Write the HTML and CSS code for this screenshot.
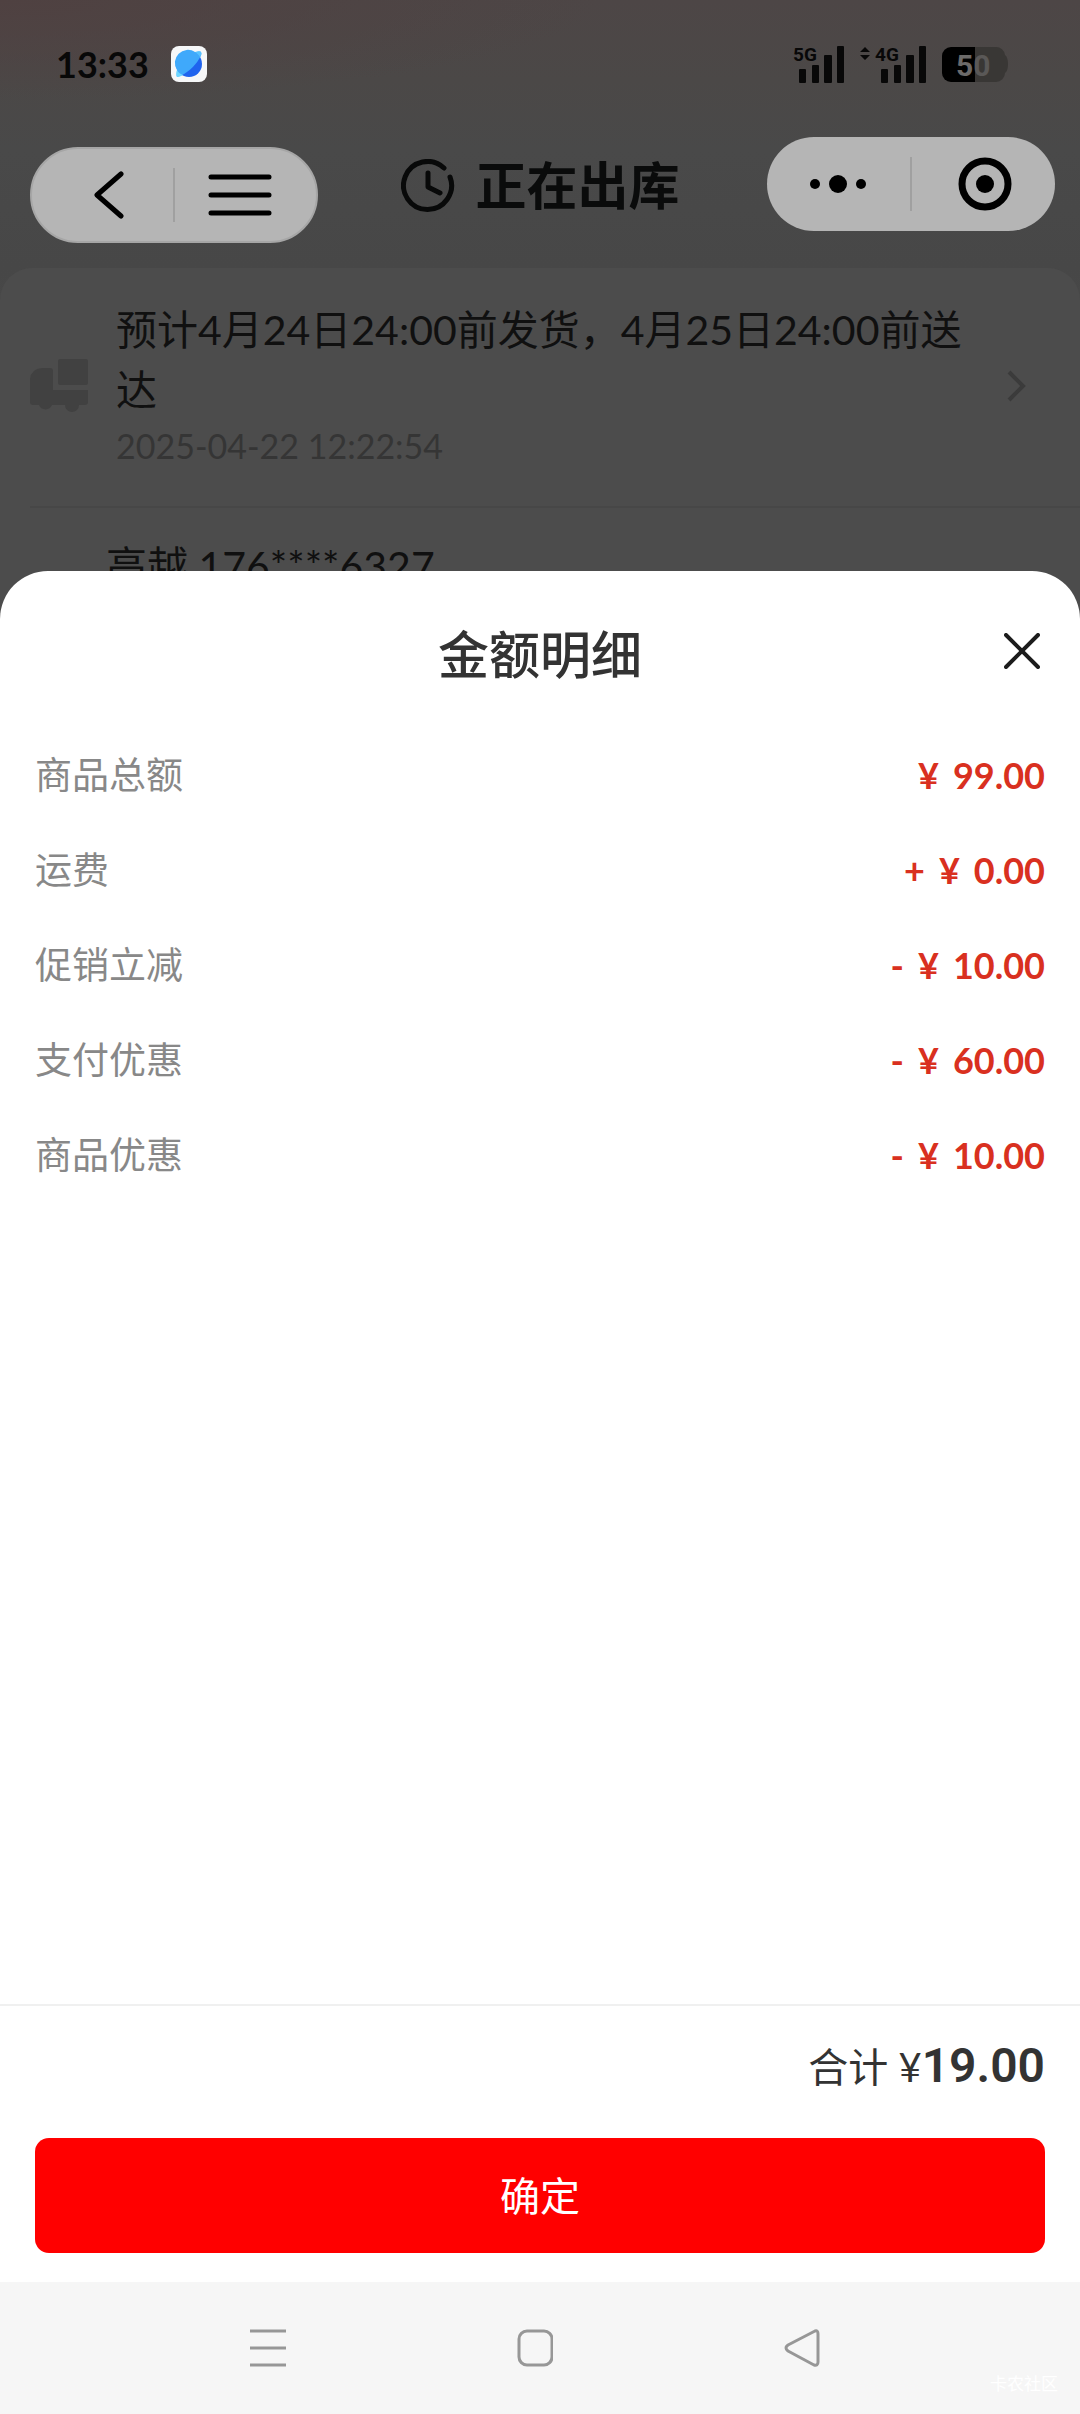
FILE: index.html
```html
<!DOCTYPE html>
<html lang="zh-CN">
<head>
<meta charset="utf-8">
<meta name="viewport" content="width=device-width, initial-scale=1">
<title>金额明细</title>
<link rel="stylesheet" href="styles.css">
</head>
<body>
<div class="screen">
  <div class="status-bar">
    <div class="status-left">
      <time class="clock">13:33</time>
      <svg class="app-icon" viewBox="0 0 36 36" aria-hidden="true">
        <rect width="36" height="36" rx="8" fill="#f6f7f8"/>
        <circle cx="18" cy="18" r="13" fill="#1f63ee"/>
        <path d="M30 6c1 2 0 4-2 7C24 20 16 28 6 31c-1-2 0-4 0-7a13 13 0 0 1 18-18c3 0 5-1 6 0z" fill="#3fa9fb"/>
        <path d="M6 24c-1 3-1 5 0 7 2 0 4-1 6-2-3-1-5-3-6-5z" fill="#6cd6ff"/>
        <path d="M30 6c-1-1-3-1-6 0 2 1 4 3 5 5 1-2 2-3 1-5z" fill="#58c3ff"/>
      </svg>
    </div>
    <div class="status-right">
      <svg width="56" height="53" viewBox="-2 -8 56 53" role="img">
        <text class="net" x="0" y="15">5G</text>
        <g fill="#080808"><rect x="6" y="23" width="7" height="14" rx="1"/><rect x="19" y="19" width="7" height="18" rx="1"/><rect x="31" y="9" width="8" height="28" rx="1"/><rect x="44" y="0" width="7" height="37" rx="1"/></g>
      </svg>
      <svg width="71" height="53" viewBox="-2 -8 71 53" role="img">
        <path d="M5 1l5 5H0zM5 14l5-5H0z" fill="#080808"/>
        <text class="net" x="15" y="15">4G</text>
        <g fill="#080808"><rect x="21" y="23" width="7" height="14" rx="1"/><rect x="34" y="19" width="7" height="18" rx="1"/><rect x="46" y="9" width="8" height="28" rx="1"/><rect x="59" y="0" width="7" height="37" rx="1"/></g>
      </svg>
      <svg width="71" height="53" viewBox="-2 -9 71 53" role="img">
        <path d="M33 0h21a9 9 0 0 1 9 8c4 2 4 16 0 18a9 9 0 0 1-9 9H33z" fill="#393735"/>
        <path d="M9 0h24v35H9a9 9 0 0 1-9-9V9a9 9 0 0 1 9-9z" fill="#000"/>
        <text x="14" y="29" class="charge">5<tspan fill="#5a5857">0</tspan></text>
      </svg>
    </div>
  </div>

  <header class="nav">
    <div class="pill pill-left">
      <button class="pill-btn" aria-label="返回">
        <svg width="30" height="48" viewBox="0 0 30 48"><path d="M27 3L3 24l24 21" fill="none" stroke="#000" stroke-width="5" stroke-linecap="round" stroke-linejoin="round"/></svg>
      </button>
      <span class="pill-line"></span>
      <button class="pill-btn" aria-label="菜单">
        <svg width="64" height="42" viewBox="0 0 64 42"><path d="M3 3h58M3 21h58M3 39h58" stroke="#000" stroke-width="5" stroke-linecap="round"/></svg>
      </button>
    </div>
    <h1 class="nav-title">
      <svg width="54" height="54" viewBox="0 0 54 54" aria-hidden="true"><path d="M43 9A24 24 0 1 0 49 18M27 14v14l12 6" fill="none" stroke="#080909" stroke-width="5" stroke-linecap="round" stroke-linejoin="round"/></svg>
      <span>正在出库</span>
    </h1>
    <div class="pill pill-right">
      <button class="pill-btn" aria-label="更多">
        <svg width="58" height="20" viewBox="0 0 58 20"><circle cx="6" cy="10" r="5"/><circle cx="29" cy="10" r="9"/><circle cx="52" cy="10" r="5"/></svg>
      </button>
      <span class="pill-line"></span>
      <button class="pill-btn" aria-label="关闭小程序">
        <svg width="54" height="54" viewBox="0 0 54 54"><circle cx="27" cy="27" r="23" fill="none" stroke="#000" stroke-width="7"/><circle cx="27" cy="27" r="9"/></svg>
      </button>
    </div>
  </header>

  <main class="card">
    <a class="delivery" href="#logistics">
      <svg class="truck" width="58" height="54" viewBox="0 0 58 54" aria-hidden="true"><g fill="#414141"><path d="M12 9h8a3 3 0 0 1 3 3v19h35v12a3 3 0 0 1-3 3h-6a7 7 0 0 1-14 0H22a7 7 0 0 1-13 0H3a3 3 0 0 1-3-3V20Q1 10 12 9z"/><rect x="28" y="0" width="30" height="26" rx="2"/></g></svg>
      <span class="delivery-text">
        <span class="delivery-main">预计4月24日24:00前发货，4月25日24:00前送达</span>
        <span class="delivery-time">2025-04-22 12:22:54</span>
      </span>
      <svg class="chevron" width="20" height="34" viewBox="0 0 20 34" aria-hidden="true"><path d="M3 3l14 14L3 31" fill="none" stroke="#3b3b3b" stroke-width="4"/></svg>
    </a>
    <p class="receiver">高越 176****6327</p>
  </main>

  <section class="sheet" role="dialog" aria-labelledby="sheet-title">
    <div class="sheet-head">
      <h2 class="sheet-title" id="sheet-title">金额明细</h2>
      <button class="close" aria-label="关闭">
        <svg width="36" height="36" viewBox="0 0 36 36"><path d="M2 2l32 32M34 2L2 34" stroke="#1c1c1c" stroke-width="4" stroke-linecap="round"/></svg>
      </button>
    </div>
    <dl class="fees">
      <div class="fee"><dt>商品总额</dt><dd><span>¥</span><span>99.00</span></dd></div>
      <div class="fee"><dt>运费</dt><dd><span>+</span><span>¥</span><span>0.00</span></dd></div>
      <div class="fee"><dt>促销立减</dt><dd><span>-</span><span>¥</span><span>10.00</span></dd></div>
      <div class="fee"><dt>支付优惠</dt><dd><span>-</span><span>¥</span><span>60.00</span></dd></div>
      <div class="fee"><dt>商品优惠</dt><dd><span>-</span><span>¥</span><span>10.00</span></dd></div>
    </dl>
    <div class="sheet-foot">
      <p class="total">合计 ¥<strong>19.00</strong></p>
      <button class="confirm">确定</button>
    </div>
  </section>
</div>

<nav class="system-nav">
  <button aria-label="最近任务"><svg width="36" height="38" viewBox="0 0 36 38"><path d="M0 2h36M0 19h36M0 36h36" stroke="#979797" stroke-width="3"/></svg></button>
  <button aria-label="主屏幕"><svg width="36" height="38" viewBox="0 0 36 38"><rect x="2" y="2" width="33" height="34" rx="8" fill="none" stroke="#979797" stroke-width="3"/></svg></button>
  <button aria-label="返回"><svg width="36" height="38" viewBox="0 0 36 38"><path d="M31 2Q34 1 34 5v28q0 4-4 3L4 22q-4-3 0-6z" fill="none" stroke="#979797" stroke-width="3" stroke-linejoin="round"/></svg></button>
  <span class="watermark">卡农社区</span>
</nav>
</body>
</html>
```
FILE: styles.css
```css
* {
  box-sizing: border-box;
  margin: 0;
  padding: 0;
}

body {
  display: flex;
  flex-direction: column;
  min-height: 100vh;
  font-family: Lato, "Noto Sans CJK SC", sans-serif;
  font-size: 40px;
  color: #333;
  background: #fff;
}

button {
  display: flex;
  align-items: center;
  justify-content: center;
  border: 0;
  background: none;
  font: inherit;
}

svg {
  display: block;
  flex: none;
}

.screen {
  position: relative;
  flex: 1;
  background:
    radial-gradient(ellipse 600px 100px at 0 0, #4f4141 0%, transparent 100%),
    linear-gradient(#4d4646 0, #4b4847 80px, #494949 150px, #474747 268px, #4b4b4b 400px);
}

/* status bar */
.status-bar {
  display: flex;
  justify-content: space-between;
  align-items: center;
  height: 128px;
  padding: 0 69px 0 56px;
}

.status-left,
.status-right {
  display: flex;
  align-items: center;
}

.status-left {
  gap: 22px;
}

.clock {
  font-size: 36px;
  font-weight: 700;
  line-height: 40px;
  color: #080808;
}

.app-icon {
  width: 36px;
  height: 36px;
}

.status-right {
  gap: 11px;
}

.net {
  font: 700 19px Roboto, sans-serif;
  fill: #080808;
}

.charge {
  font: 700 30px Roboto, sans-serif;
  fill: #6c6a69;
}

/* top navigation */
.nav {
  display: flex;
  justify-content: space-between;
  align-items: flex-start;
  height: 140px;
  padding: 9px 25px 0 30px;
}

.pill {
  display: grid;
  grid-template-columns: 1fr 2px 1fr;
  align-items: center;
  width: 288px;
  height: 94px;
  border-radius: 47px;
  background: #b5b5b5;
}

.pill-left {
  height: 96px;
  margin-top: 10px;
  border: 2px solid #a6a6a6;
  border-radius: 48px;
}

.pill-btn {
  height: 100%;
}

.pill-left .pill-btn:first-child {
  padding-left: 12px;
}

.pill-left .pill-btn:last-child {
  padding-right: 12px;
}

.pill-right .pill-btn:last-child {
  padding-left: 4px;
}

.pill-line {
  height: 54px;
  background: #a0a0a0;
}

.nav-title {
  display: flex;
  align-items: center;
  gap: 20px;
  height: 98px;
  padding-right: 4px;
  font-size: 51px;
  font-weight: 700;
  line-height: 60px;
  color: #0a0b0b;
}

/* order card */
.card {
  border-radius: 32px 32px 0 0;
  background: #4c4c4c;
}

.delivery {
  display: flex;
  align-items: center;
  gap: 28px;
  margin-left: 30px;
  padding: 32px 54px 34px 0;
  border-bottom: 2px solid #474747;
  color: #101010;
  text-decoration: none;
}

.delivery-text {
  display: flex;
  flex: 1;
  flex-direction: column;
}

.delivery-main {
  font-size: 41px;
  line-height: 60px;
}

.delivery-time {
  font-size: 34px;
  line-height: 52px;
  color: #353535;
}

.receiver {
  padding: 28px 106px;
  font-size: 41px;
  line-height: 60px;
  color: #101010;
}

/* bottom sheet */
.sheet {
  position: absolute;
  inset: 571px 0 0;
  display: flex;
  flex-direction: column;
  border-radius: 48px 48px 0 0;
  background: #fff;
}

.sheet-head {
  display: grid;
  grid-template-columns: 60px 1fr 60px;
  align-items: center;
  padding: 54px 28px 42px;
}

.sheet-title {
  grid-column: 2;
  font-size: 51px;
  font-weight: 500;
  line-height: 60px;
  text-align: center;
}

.close {
  height: 52px;
  align-self: start;
}

.fees {
  flex: 1;
  padding: 0 35px;
}

.fee {
  display: flex;
  justify-content: space-between;
  align-items: center;
  height: 95px;
  font-size: 37px;
  line-height: 48px;
}

.fee dt {
  color: #888;
}

.fee dd {
  display: flex;
  gap: 14px;
  font-size: 36px;
  font-weight: 700;
  color: #d93020;
}

.sheet-foot {
  padding: 30px 35px 29px;
  border-top: 2px solid #f0f0f0;
}

.total {
  margin-bottom: 41px;
  font-size: 40px;
  line-height: 60px;
  text-align: right;
}

.total strong {
  font-family: Roboto, sans-serif;
  font-size: 48px;
  font-weight: 600;
}

.confirm {
  width: 100%;
  height: 115px;
  padding-bottom: 4px;
  border-radius: 14px;
  background: #f00;
  color: #fff;
}

/* system navigation */
.system-nav {
  position: relative;
  display: flex;
  justify-content: center;
  gap: 231px;
  height: 132px;
  padding: 0 10px 0 0;
  background: #f6f6f6;
}

.watermark {
  position: absolute;
  right: 22px;
  bottom: 18px;
  font-size: 17px;
  line-height: 24px;
  color: #fff;
}
```
